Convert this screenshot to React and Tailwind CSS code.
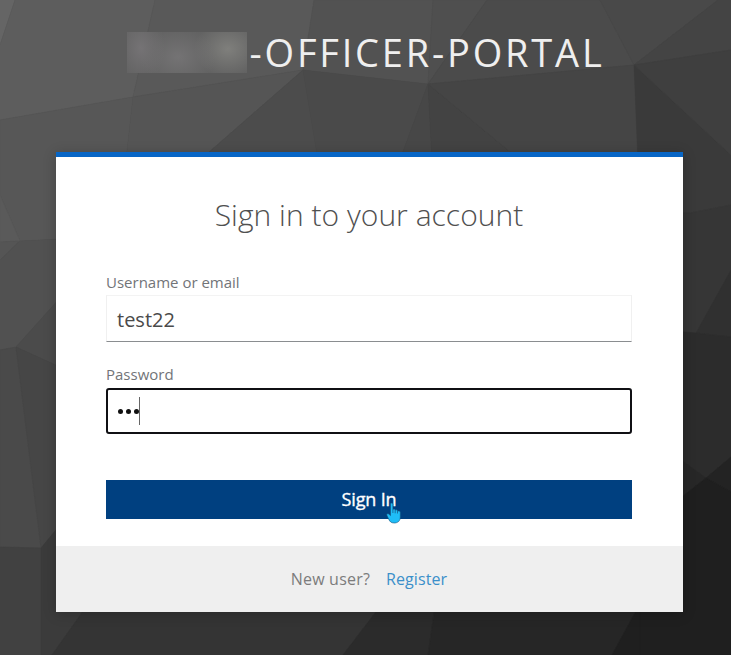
const facets = [
  { points: '0,0 15,0 0,45', fill: '#656565' },
  { points: '15,0 155,0 133,97 0,120 0,45', fill: '#5d5d5d' },
  { points: '155,0 314,0 303,70 133,97', fill: '#595959' },
  { points: '314,0 433,0 428,84 303,70', fill: '#525252' },
  { points: '433,0 487,0 428,84', fill: '#4f4f4f' },
  { points: '487,0 600,0 634,65 428,84', fill: '#4b4b4b' },
  { points: '600,0 718,0 634,65', fill: '#494949' },
  { points: '718,0 731,0 731,50 634,65', fill: '#444444' },
  { points: '0,120 133,97 126,160 60,239 20,241 0,195', fill: '#575757' },
  { points: '133,97 303,70 200,160 126,160', fill: '#555555' },
  { points: '303,70 318,160 200,160', fill: '#4c4c4c' },
  { points: '303,70 428,84 400,160 318,160', fill: '#4a4a4a' },
  { points: '428,84 432,160 400,160', fill: '#474747' },
  { points: '428,84 520,160 432,160', fill: '#434343' },
  { points: '428,84 634,65 640,160 520,160', fill: '#454545' },
  { points: '634,65 731,155 731,205 690,213 640,213', fill: '#3a3a3a' },
  { points: '634,65 731,50 731,155', fill: '#3f3f3f' },
  { points: '0,195 20,241 0,242', fill: '#5a5a5a' },
  { points: '0,242 20,241 0,260', fill: '#555555' },
  { points: '0,260 20,241 60,239 60,298 16,347 0,350', fill: '#515151' },
  { points: '16,347 60,298 60,367', fill: '#4b4b4b' },
  { points: '0,350 16,347 41,548 0,547', fill: '#4a4a4a' },
  { points: '16,347 60,367 60,525 41,548', fill: '#464646' },
  { points: '0,547 41,548 41,655 0,655', fill: '#414141' },
  { points: '41,548 60,525 91,600 52,655 41,655', fill: '#3b3b3b' },
  { points: '52,655 91,600 385,600 343,655', fill: '#343434' },
  { points: '385,600 436,600 428,655 343,655', fill: '#2b2b2b' },
  { points: '436,600 642,600 612,655 428,655', fill: '#262626' },
  { points: '642,600 650,600 650,655 612,655', fill: '#1f1f1f' },
  { points: '640,213 690,213 731,205 731,270 696,333 640,328', fill: '#363636' },
  { points: '731,270 731,337 696,333', fill: '#303030' },
  { points: '640,328 696,333 731,337 731,457 706,478 640,430', fill: '#2c2c2c' },
  { points: '640,430 706,478 640,530', fill: '#272727' },
  { points: '731,457 731,492 706,478', fill: '#232323' },
  { points: '706,478 731,492 731,655 640,655 640,530', fill: '#1f1f1f' },
];

function Backdrop() {
  return (
    <svg className="absolute inset-0 -z-10" width="731" height="655" viewBox="0 0 731 655" aria-hidden="true">
      <rect width="731" height="655" fill="#404040" />
      {facets.map((f) => (
        <polygon key={f.points} points={f.points} fill={f.fill} stroke={f.fill} strokeWidth="0.5" />
      ))}
    </svg>
  );
}

function Pointer() {
  return (
    <svg className="absolute left-[386px] top-[502px]" width="16" height="22" viewBox="0 0 16 22" aria-hidden="true">
      <path
        d="M4.5 2.2c0-1.6 2.4-1.6 2.4 0V7.5c.5-.9 2.2-.7 2.3.4v.4c.6-.8 2.2-.6 2.3.5v.5c.7-.7 2.8-.4 2.8.8V15c0 3.800-2.300 6-6.100 6-3.200 0-4.300-1.500-5.400-3.600L.9 13.300c-.6-1.300.9-2.100 1.900-1.200l1.700 1.500z"
        fill="#1fbdf7"
        stroke="#14507c"
        strokeWidth="0.6"
      />
      <path d="M6.900 7.500v3.500M9.200 8.300v3M11.500 9.300v2.200" stroke="#14507c" strokeWidth="0.7" />
    </svg>
  );
}

export default function App() {
  return (
    <div className="relative isolate flex h-[655px] w-[731px] flex-col overflow-hidden font-['Open_Sans',sans-serif]">
      <Backdrop />
      <header className="flex h-[152px] shrink-0 pl-[127px] pt-8">
        <div className="h-[41px] w-[120px] shrink-0 overflow-hidden bg-[#626262]">
          <div className="h-full w-full bg-[radial-gradient(24px_34px_at_14px_16px,#757375_0%,transparent_100%),radial-gradient(38px_30px_at_51px_25px,#747374_0%,transparent_100%),radial-gradient(34px_28px_at_101px_17px,#7f7f7c_0%,transparent_100%)]" />
        </div>
        <h1 className="ml-[2.5px] h-[41px] whitespace-nowrap text-[38px] leading-[41px] tracking-[2.8px] text-[#efefef]">
          -OFFICER-PORTAL
        </h1>
      </header>
      <main className="ml-14 flex h-[460px] w-[627px] shrink-0 flex-col border-t-[5px] border-[#0866c6] bg-white shadow-[0_2px_12px_rgba(0,0,0,0.22)]">
        <form className="flex h-[389px] flex-col pl-[50px] pr-[51px]" onSubmit={(e) => e.preventDefault()}>
          <h2 className="mt-[38px] h-10 whitespace-nowrap text-center text-[30px] font-light leading-10 tracking-[0.03px] text-[#505050]">
            Sign in to your account
          </h2>
          <label className="mt-[37px] h-5 text-[15px] leading-5 text-[#727478]">Username or email</label>
          <div className="mt-[3px] flex h-[47px] items-center border border-b-[#8a8d90] border-l-[#f0f0f0] border-r-[#f0f0f0] border-t-[#f3f3f3] px-[10px] pt-[2px] text-xl text-[#4a4a4a]">
            test22
          </div>
          <label className="mt-[22px] h-5 text-[15px] leading-5 text-[#727478]">Password</label>
          <div className="mt-1 flex h-[46px] items-center rounded-[3px] border-2 border-[#101014] pl-[10px]">
            <span className="flex gap-[3px]">
              <i className="size-[5px] rounded-full bg-[#111]" />
              <i className="size-[5px] rounded-full bg-[#111]" />
              <i className="size-[5px] rounded-full bg-[#111]" />
            </span>
            <span className="h-7 w-px bg-[#666]" />
          </div>
          <button className="mt-[46px] h-[39px] bg-[#004080] pb-px text-lg font-medium leading-[38px] tracking-[-0.15px] text-white [-webkit-text-stroke:0.35px_white]">
            Sign In
          </button>
        </form>
        <footer className="flex flex-1 items-center justify-center gap-4 bg-[#efefef] pr-px text-base text-[#7c7c7c]">
          <span className="tracking-[0.2px]">New user?</span>
          <a className="tracking-[0.1px] text-[#3b8fca]">Register</a>
        </footer>
      </main>
      <Pointer />
    </div>
  );
}
